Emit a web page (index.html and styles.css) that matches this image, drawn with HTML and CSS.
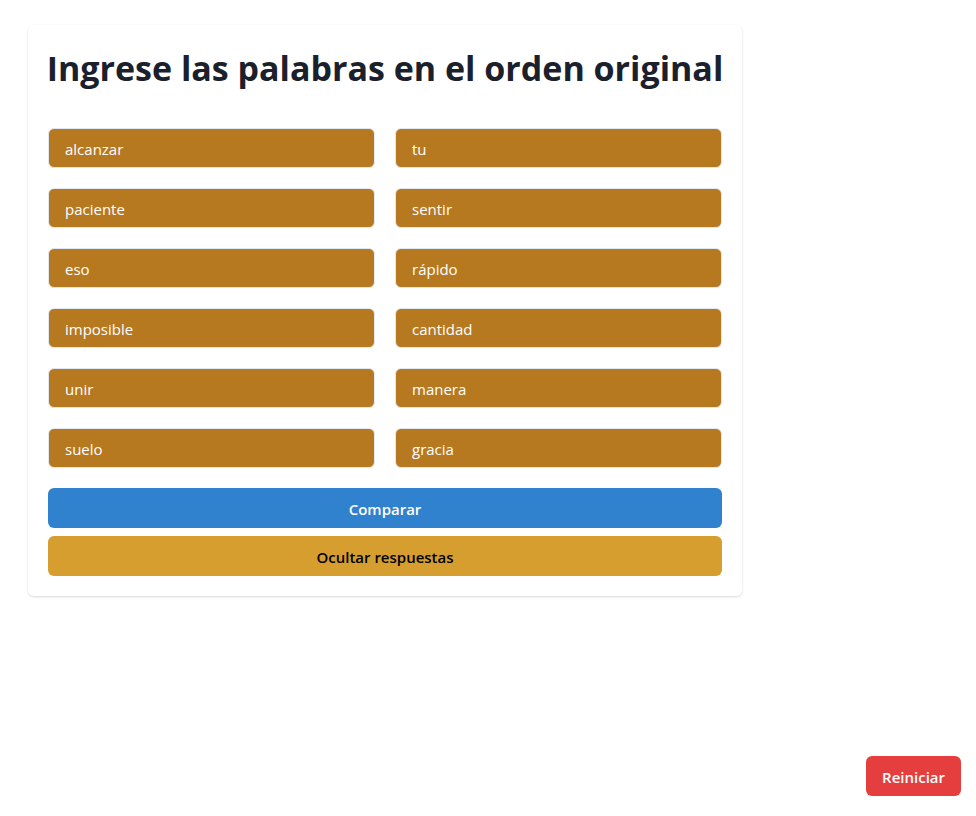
FILE: index.html
```html
<!DOCTYPE html>
<html lang="es">
<head>
<meta charset="utf-8">
<meta name="viewport" content="width=device-width, initial-scale=1">
<title>Ingrese las palabras</title>
<link rel="stylesheet" href="styles.css">
</head>
<body>
<main class="page">
  <form class="card">
    <h1 class="title">Ingrese las palabras en el orden original</h1>
    <div class="words">
      <input class="word" type="text" aria-label="Palabra 1" value="alcanzar">
      <input class="word" type="text" aria-label="Palabra 2" value="tu">
      <input class="word" type="text" aria-label="Palabra 3" value="paciente">
      <input class="word" type="text" aria-label="Palabra 4" value="sentir">
      <input class="word" type="text" aria-label="Palabra 5" value="eso">
      <input class="word" type="text" aria-label="Palabra 6" value="rápido">
      <input class="word" type="text" aria-label="Palabra 7" value="imposible">
      <input class="word" type="text" aria-label="Palabra 8" value="cantidad">
      <input class="word" type="text" aria-label="Palabra 9" value="unir">
      <input class="word" type="text" aria-label="Palabra 10" value="manera">
      <input class="word" type="text" aria-label="Palabra 11" value="suelo">
      <input class="word" type="text" aria-label="Palabra 12" value="gracia">
    </div>
    <div class="actions">
      <button class="button button-compare" type="button">Comparar</button>
      <button class="button button-hide" type="button">Ocultar respuestas</button>
    </div>
  </form>
</main>
<button class="button button-reset" type="button">Reiniciar</button>
</body>
</html>
```
FILE: styles.css
```css
*, *::before, *::after {
  box-sizing: border-box;
}

body {
  margin: 0;
  background: #fff;
  color: #1a202c;
  font-family: "Segoe UI", "Open Sans", "Noto Sans", sans-serif;
  font-size: 15px;
  line-height: 24px;
}

.page {
  padding: 25px 28px;
}

.card {
  max-width: 714px;
  padding: 20px;
  border-radius: 6px;
  box-shadow: 0 1px 3px rgba(0, 0, 0, 0.1), 0 1px 2px rgba(0, 0, 0, 0.06);
}

.title {
  margin: 0 -4px 37px;
  font-size: 34px;
  font-weight: 700;
  line-height: 46px;
  text-align: center;
}

.words {
  display: grid;
  grid-template-columns: 1fr 1fr;
  gap: 20px;
}

.word {
  width: 100%;
  min-width: 0;
  height: 40px;
  padding: 2px 16px 0;
  border: 1px solid #e2e8f0;
  border-radius: 6px;
  background: #b7791f;
  color: #fff;
  font: inherit;
}

.actions {
  display: grid;
  gap: 8px;
  margin-top: 20px;
}

.button {
  height: 40px;
  padding: 2px 16px 0;
  border: 0;
  border-radius: 6px;
  color: #fff;
  font: inherit;
  font-weight: 600;
}

.button-compare {
  background: #3182ce;
}

.button-hide {
  background: #d69e2e;
  color: #000;
}

.button-reset {
  position: fixed;
  right: 15px;
  bottom: 20px;
  background: #e53e3e;
}
```
